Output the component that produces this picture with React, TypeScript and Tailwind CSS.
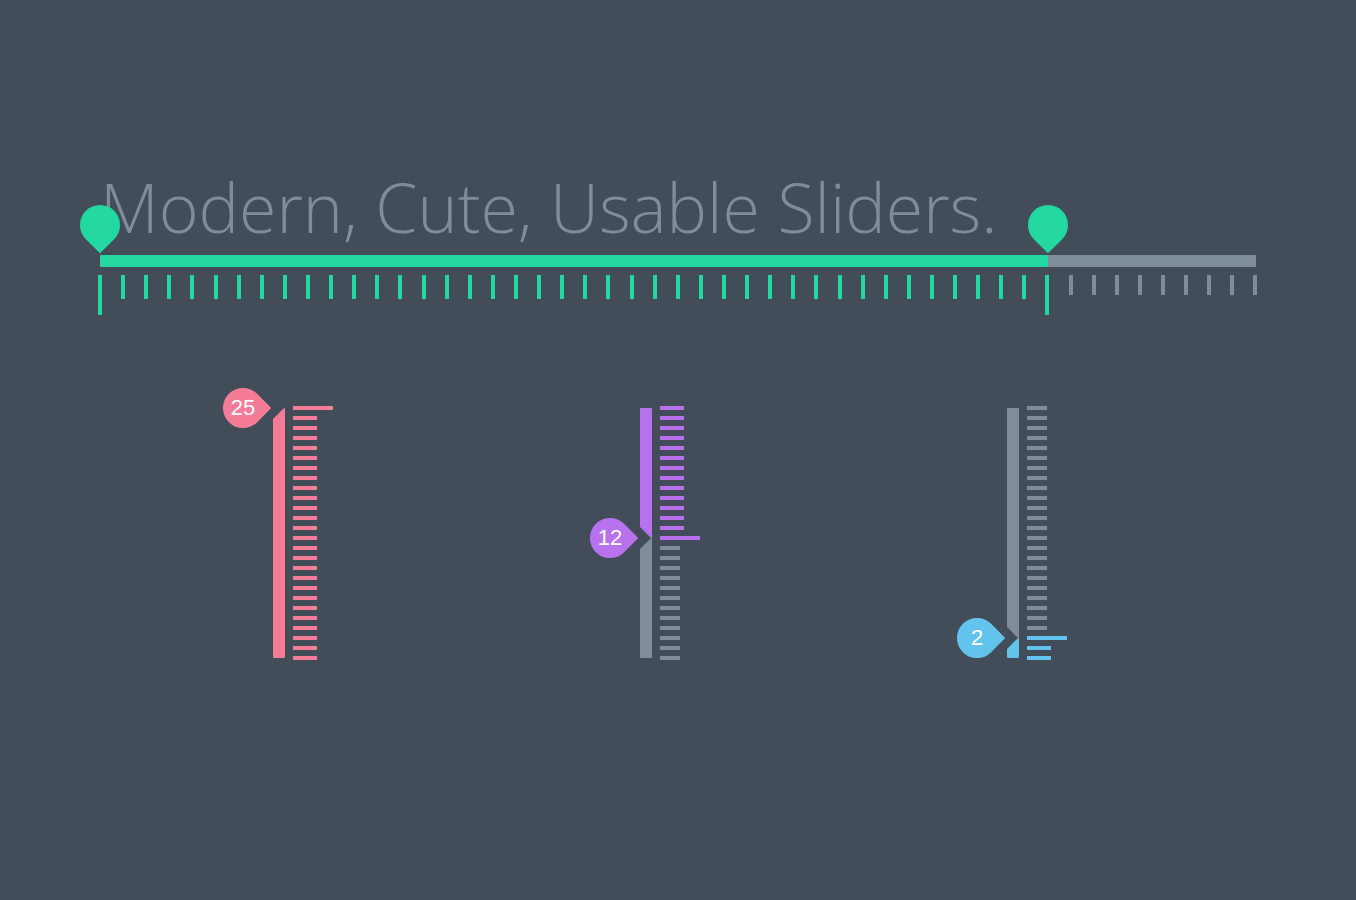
import React from 'react';

// Horizontal range slider: 50 steps across a 1156px track
const H_STEPS = 50;
const H_WIDTH = 1156;
const H_STEP = H_WIDTH / H_STEPS;
const RANGE = { lo: 0, hi: 41 };

// Vertical sliders: 0..25, 10px per step
const V_MAX = 25;
const V_STEP = 10;

type Fill = 'above' | 'below';

type VSpec = {
  value: number;
  fill: Fill;
  bg: string;
};

const SLIDERS: VSpec[] = [
  { value: 25, fill: 'below', bg: 'bg-[#f47c96]' },
  { value: 12, fill: 'above', bg: 'bg-[#b972ee]' },
  { value: 2, fill: 'below', bg: 'bg-[#62c4ec]' },
];

function Pin({ x }: { x: number }) {
  return (
    <div
      className="absolute top-[-50px] h-10 w-10 rotate-45 rounded-[50%_50%_0_50%] bg-[#24d9a1]"
      style={{ left: x - 20 }}
    />
  );
}

function RangeSlider() {
  const ticks = Array.from({ length: H_STEPS + 1 }, (_, i) => {
    const active = i >= RANGE.lo && i <= RANGE.hi;
    const edge = i === RANGE.lo || i === RANGE.hi;
    const cls = edge
      ? 'h-10 bg-[#24d9a1]'
      : active
        ? 'h-6 bg-[#24d9a1]'
        : 'h-5 bg-[#7f8c9c]';
    return <div key={i} className={`w-1 shrink-0 ${cls}`} />;
  });

  return (
    <div className="relative mt-[14px] w-[1156px]">
      <div className="flex h-3 w-full bg-[#7f8c9c]">
        <div
          className="h-full rounded-[2px] bg-[#24d9a1]"
          style={{ width: (RANGE.hi - RANGE.lo) * H_STEP, marginLeft: RANGE.lo * H_STEP }}
        />
      </div>
      <div className="-ml-[2px] mt-2 flex w-[1160px] items-start justify-between">{ticks}</div>
      <Pin x={RANGE.lo * H_STEP} />
      <Pin x={RANGE.hi * H_STEP} />
    </div>
  );
}

function Bubble({ value, top, bg }: { value: number; top: number; bg: string }) {
  return (
    <div className="absolute left-[-59px] z-10 h-[58px] w-[58px]" style={{ top }}>
      <div
        className={`absolute inset-0 rotate-45 rounded-[50%_0_50%_50%] border-[9px] border-[#434c59] ${bg}`}
      />
      <span className="relative flex h-full w-full items-center justify-center font-['Liberation_Sans',Arial,sans-serif] text-[22px] leading-none text-white">
        {value}
      </span>
    </div>
  );
}

function VSlider({ spec }: { spec: VSpec }) {
  const { value, fill, bg } = spec;
  const pos = (V_MAX - value) * V_STEP;

  const ticks = Array.from({ length: V_MAX + 1 }, (_, k) => {
    const v = V_MAX - k;
    const active = fill === 'below' ? v <= value : v >= value;
    const cls = v === value ? `w-10 ${bg}` : active ? `w-6 ${bg}` : 'w-5 bg-[#7f8c9c]';
    return <div key={k} className={`h-1 ${cls}`} />;
  });

  return (
    <div className="relative flex w-[367px] shrink-0 items-start gap-2">
      <div className="mt-[2px] flex h-[250px] w-3 shrink-0 flex-col bg-[#7f8c9c]">
        {fill === 'above' ? (
          <div className={`rounded-[2px] ${bg}`} style={{ height: pos }} />
        ) : (
          <>
            <div className="flex-1" />
            <div className={`rounded-[2px] ${bg}`} style={{ height: value * V_STEP }} />
          </>
        )}
      </div>
      <div className="flex h-[254px] flex-col items-start justify-between">{ticks}</div>
      <Bubble value={value} top={2 + pos - 29} bg={bg} />
    </div>
  );
}

export default function App() {
  return (
    <div className="h-[900px] w-full overflow-hidden bg-[#434c59] pl-[100px] pt-[173px]">
      <h1 className="font-['Open_Sans','Noto_Sans',sans-serif] text-[68px] font-light leading-none text-[#7f8c9c]">
        Modern, Cute, Usable Sliders.
      </h1>
      <RangeSlider />
      <div className="ml-[173px] mt-[91px] flex">
        {SLIDERS.map((s, i) => (
          <VSlider key={i} spec={s} />
        ))}
      </div>
    </div>
  );
}
